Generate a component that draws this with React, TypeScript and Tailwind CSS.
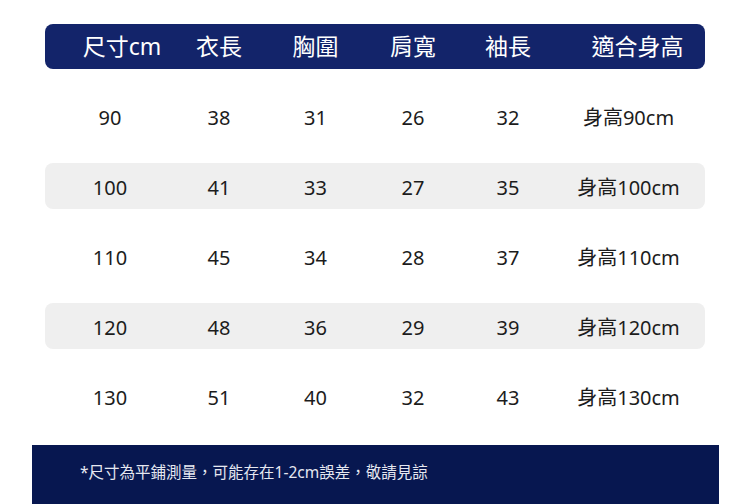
const headers = ['尺寸cm', '衣長', '胸圍', '肩寬', '袖長', '適合身高'];

const rows = [
  ['90', '38', '31', '26', '32', '身高90cm'],
  ['100', '41', '33', '27', '35', '身高100cm'],
  ['110', '45', '34', '28', '37', '身高110cm'],
  ['120', '48', '36', '29', '39', '身高120cm'],
  ['130', '51', '40', '32', '43', '身高130cm'],
];

const cols = 'grid grid-cols-[130px_88px_105px_90px_100px_147px] items-center';

function App() {
  return (
    <div
      className="w-[750px] h-[504px] bg-white flex flex-col overflow-hidden"
      style={{ fontFamily: "'Noto Sans', 'Noto Sans CJK TC', sans-serif" }}
    >
      <div className="flex flex-col gap-[24px] pt-[24px] ml-[45px] w-[660px]">
        <div className={`${cols} h-[45px] rounded-[8px] bg-[#13246a] text-white text-[23px]`}>
          {headers.map((h, i) => (
            <span
              key={h}
              className={
                i === 0 ? 'text-center pl-[24px]' : i === 5 ? 'text-center pl-[12px]' : 'text-center'
              }
            >
              {h}
            </span>
          ))}
        </div>

        {rows.map((r, idx) => (
          <div
            key={r[0]}
            className={`${cols} h-[46px] pt-[3px] rounded-[8px] text-[20px] text-[#1c1c1c] ${
              idx % 2 === 1 ? 'bg-[#efefef]' : ''
            }`}
          >
            {r.map((c, i) => (
              <span key={i} className={i === 5 ? 'text-center pr-[6px]' : 'text-center'}>
                {c}
              </span>
            ))}
          </div>
        ))}
      </div>

      <div className="mt-[26px] ml-[32px] w-[687px] h-[59px] bg-[#071750] flex items-center pl-[48px]">
        <p className="text-[15.5px] text-[#e6e8f0] pb-[4px]">*尺寸為平鋪測量，可能存在1-2cm誤差，敬請見諒</p>
      </div>
    </div>
  );
}

export default App;
